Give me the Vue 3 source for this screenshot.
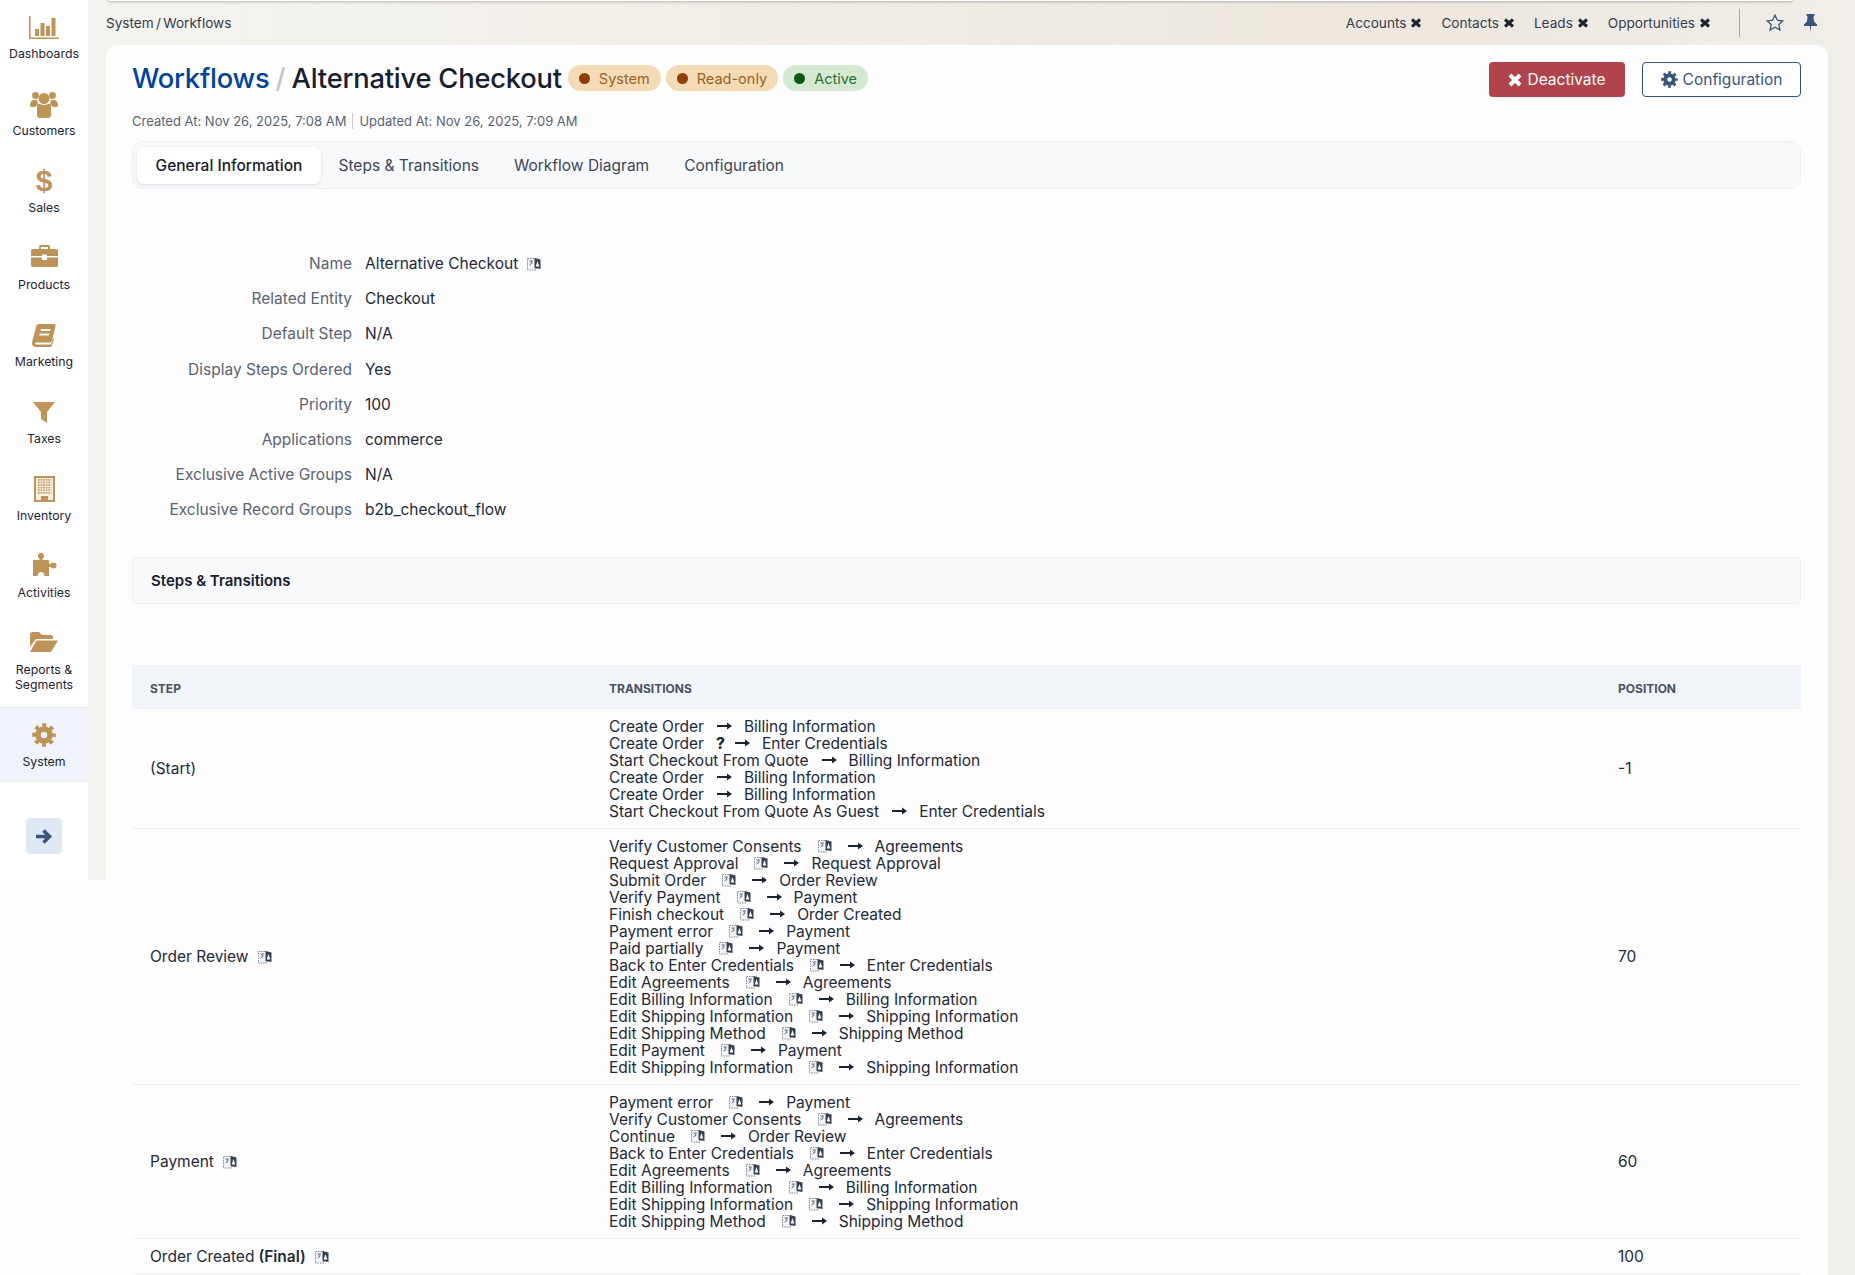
<script setup>
const tabs = ['General Information', 'Steps & Transitions', 'Workflow Diagram', 'Configuration']
const quick = ['Accounts', 'Contacts', 'Leads', 'Opportunities']
const details = [
  ['Name', 'Alternative Checkout', true],
  ['Related Entity', 'Checkout'],
  ['Default Step', 'N/A'],
  ['Display Steps Ordered', 'Yes'],
  ['Priority', '100'],
  ['Applications', 'commerce'],
  ['Exclusive Active Groups', 'N/A'],
  ['Exclusive Record Groups', 'b2b_checkout_flow'],
]
const nav = [
  { key: 'bars', label: ['Dashboards'] },
  { key: 'users', label: ['Customers'] },
  { key: 'dollar', label: ['Sales'] },
  { key: 'case', label: ['Products'] },
  { key: 'book', label: ['Marketing'] },
  { key: 'funnel', label: ['Taxes'] },
  { key: 'building', label: ['Inventory'] },
  { key: 'puzzle', label: ['Activities'] },
  { key: 'folder', label: ['Reports &', 'Segments'] },
  { key: 'cog', label: ['System'], active: true },
]
const t = (from, to, mark = 'tr') => ({ from, to, mark })
const rows = [
  { step: '(Start)', position: '-1', lines: [
    t('Create Order', 'Billing Information', ''),
    t('Create Order', 'Enter Credentials', 'q'),
    t('Start Checkout From Quote', 'Billing Information', ''),
    t('Create Order', 'Billing Information', ''),
    t('Create Order', 'Billing Information', ''),
    t('Start Checkout From Quote As Guest', 'Enter Credentials', ''),
  ] },
  { step: 'Order Review', icon: true, position: '70', lines: [
    t('Verify Customer Consents', 'Agreements'),
    t('Request Approval', 'Request Approval'),
    t('Submit Order', 'Order Review'),
    t('Verify Payment', 'Payment'),
    t('Finish checkout', 'Order Created'),
    t('Payment error', 'Payment'),
    t('Paid partially', 'Payment'),
    t('Back to Enter Credentials', 'Enter Credentials'),
    t('Edit Agreements', 'Agreements'),
    t('Edit Billing Information', 'Billing Information'),
    t('Edit Shipping Information', 'Shipping Information'),
    t('Edit Shipping Method', 'Shipping Method'),
    t('Edit Payment', 'Payment'),
    t('Edit Shipping Information', 'Shipping Information'),
  ] },
  { step: 'Payment', icon: true, position: '60', lines: [
    t('Payment error', 'Payment'),
    t('Verify Customer Consents', 'Agreements'),
    t('Continue', 'Order Review'),
    t('Back to Enter Credentials', 'Enter Credentials'),
    t('Edit Agreements', 'Agreements'),
    t('Edit Billing Information', 'Billing Information'),
    t('Edit Shipping Information', 'Shipping Information'),
    t('Edit Shipping Method', 'Shipping Method'),
  ] },
  { step: 'Order Created', final: true, icon: true, position: '100', lines: [] },
]
</script>

<template>
  <div class="app">
    <aside class="sidebar">
      <nav>
        <div v-for="n in nav" :key="n.key" class="nav-item" :class="{ active: n.active }">
          <div class="nav-icon">
            <svg v-if="n.key === 'bars'" width="30" height="23" viewBox="0 0 30 23"><path d="M0 0h1.6v21.4H30V23H0z" /><rect x="6" y="13" width="4" height="7" /><rect x="11.5" y="7" width="4" height="13" /><rect x="17" y="10" width="4" height="10" /><rect x="22.5" y="2" width="4" height="18" /></svg>
            <svg v-else-if="n.key === 'users'" width="28" height="27" viewBox="0 0 28 27"><circle cx="14" cy="7.5" r="5.5" /><circle cx="5.5" cy="4.5" r="3.4" /><circle cx="22.5" cy="4.5" r="3.4" /><path d="M0 14q0-5 5-5h2q1 3 1 4l-3 3H2q-2 0-2-2zM28 14q0-5-5-5h-2q-1 3-1 4l3 3h3q2 0 2-2z" /><path d="M7 15q0-3 3-2 4 2 8 0 3-1 3 2v9q0 3-3 3h-8q-3 0-3-3z" /></svg>
            <span v-else-if="n.key === 'dollar'" class="dollar">$</span>
            <svg v-else-if="n.key === 'case'" class="up2" width="27" height="22" viewBox="0 0 27 22"><path d="M8 5V2q0-2 2-2h7q2 0 2 2v3h-2V2h-7v3z" /><path d="M2 4h23q2 0 2 2v5H16V9.500h-5V11H0V6q0-2 2-2zM0 12.500h11V15h5v-2.500h11V20q0 2-2 2H2q-2 0-2-2z" /></svg>
            <svg v-else-if="n.key === 'book'" width="24" height="23" viewBox="0 0 24 23"><path fill-rule="evenodd" d="M7 0h15q2 0 1.500 2.500l-3.500 14q-.5 2-2.500 2H5q-2 0-2 1t2 1h14l2-6 1 1-2.500 7q-.3 .5-1 .5H4q-4 0-4-4 0-1 .5-2.500L4 3q.5-3 3-3zM9 5l-.5 2H18l.5-2zM7.700 9.500l-.5 2h9.500l.5-2z" /></svg>
            <svg v-else-if="n.key === 'funnel'" width="22" height="21" viewBox="0 0 22 21"><path d="M0 0h22l-8 10v11l-6-4v-7z" /></svg>
            <svg v-else-if="n.key === 'building'" width="21" height="26" viewBox="0 0 21 26">
              <defs><pattern id="windows" x="4" y="3" width="2.600" height="2.600" patternUnits="userSpaceOnUse"><rect width="1.600" height="1.600" fill="#bd9357" /></pattern></defs>
              <rect x="1" y="1" width="19" height="24" fill="#f8f0e2" stroke="#bd9357" stroke-width="2" />
              <rect x="4" y="3" width="13.500" height="15" fill="url(#windows)" />
              <rect x="7" y="20" width="7" height="5" />
            </svg>
            <svg v-else-if="n.key === 'puzzle'" class="up2" width="25" height="23" viewBox="0 0 25 23"><circle cx="9" cy="3" r="3" /><circle cx="21.500" cy="12.500" r="3" /><path d="M7.500 4h3v3H17v4h3v3h-3v9h-4.500q-.5-4-3.500-4t-3.500 4H1V7h6.500z" /></svg>
            <svg v-else-if="n.key === 'folder'" class="up1" width="28" height="20" viewBox="0 0 28 20"><path d="M0 3q0-3 3-3h6l3 3h9q2 0 2 2v2H6L0 15z" /><path d="M6.500 8.500H28L21 20H0z" /></svg>
            <svg v-else-if="n.key === 'cog'" width="24" height="24" viewBox="0 0 24 24"><g fill="none" stroke="#bd9357"><circle cx="12" cy="12" r="6" stroke-width="5.500" /><circle cx="12" cy="12" r="9.800" stroke-width="4" stroke-dasharray="3.900 3.800" stroke-dashoffset="2" /></g></svg>
          </div>
          <div class="nav-label"><div v-for="l in n.label" :key="l">{{ l }}</div></div>
        </div>
      </nav>
      <button class="collapse" type="button" aria-label="Expand">
        <svg width="16" height="15" viewBox="0 0 16 15" fill="none" stroke="#38547a" stroke-width="3.600"><path d="M0 7.500h13M7.500 1.500l6 6-6 6" /></svg>
      </button>
    </aside>

    <div class="main">
      <header class="topbar">
        <div class="crumbs">System / Workflows</div>
        <div class="top-right">
          <span v-for="q in quick" :key="q" class="quick">{{ q }}
            <svg class="x" width="10" height="10" viewBox="0 0 10 10" stroke="#1c2433" stroke-width="3"><path d="M1 1.500 9 8.500M9 1.500 1 8.500" /></svg>
          </span>
          <span class="top-divider"></span>
          <svg class="star" width="18" height="17" viewBox="0 0 18 17" fill="none" stroke="#38547a" stroke-width="1.300"><path d="m9 1.200 2.400 5 5.400.7-4 3.700 1.100 5.400L9 13.300 4.100 16l1.100-5.400-4-3.700 5.400-.7z" /></svg>
          <svg class="pin" width="13" height="18" viewBox="0 0 13 18" fill="#38547a"><path d="M2.500 0h8v1.500L9.500 2.500 10 7.500 13 10.500V12H7.200l-.7 6-.7-6H0v-1.500L3 7.500l.5-5L2.500 1.500z" /></svg>
        </div>
      </header>

      <main class="card">
        <div class="head">
          <div>
            <div class="title-row">
              <h1 class="title"><span class="link">Workflows</span><span class="slash"> / </span>Alternative Checkout</h1>
              <span class="badge warn"><i></i>System</span>
              <span class="badge warn"><i></i>Read-only</span>
              <span class="badge ok"><i></i>Active</span>
            </div>
            <div class="meta"><span>Created At: Nov 26, 2025, 7:08 AM</span><span class="meta-sep"></span><span>Updated At: Nov 26, 2025, 7:09 AM</span></div>
          </div>
          <div class="actions">
            <button class="btn danger" type="button">
              <svg width="14" height="14" viewBox="0 0 14 14" stroke="#fff" stroke-width="4"><path d="M2 2l10 10M12 2 2 12" /></svg>Deactivate
            </button>
            <button class="btn outline" type="button">
              <svg width="17" height="17" viewBox="0 0 24 24"><g fill="none" stroke="#38547a"><circle cx="12" cy="12" r="6" stroke-width="5.500" /><circle cx="12" cy="12" r="9.800" stroke-width="4" stroke-dasharray="3.900 3.800" stroke-dashoffset="2" /></g></svg>Configuration
            </button>
          </div>
        </div>

        <div class="tabs">
          <div v-for="(tab, i) in tabs" :key="tab" class="tab" :class="{ on: i === 0 }">{{ tab }}</div>
        </div>

        <div class="details">
          <div v-for="d in details" :key="d[0]" class="detail">
            <div class="d-label">{{ d[0] }}</div>
            <div class="d-value">{{ d[1] }}
              <svg v-if="d[2]" class="tr" width="14" height="16" viewBox="0 0 14 16"><rect x=".5" y="2.500" width="8.500" height="11.500" fill="#f3f4f6" stroke="#7f8996" stroke-dasharray="1.500 1" /><path d="M2.500 5h3.500M4.200 5v3M2.500 9l3-2" stroke="#6b7683" fill="none" /><path d="M7.500 2 13.500 3.500v9.500L7.500 12z" fill="#36424f" /><path d="M10.500 5 12.300 10.500H8.700z" fill="#fff" /></svg>
            </div>
          </div>
        </div>

        <div class="section">Steps &amp; Transitions</div>

        <div class="table">
          <div class="tr-row thead">
            <div class="c1">STEP</div>
            <div class="c2">TRANSITIONS</div>
            <div class="c3">POSITION</div>
          </div>
          <div v-for="r in rows" :key="r.step" class="tr-row tbody" :class="{ short: !r.lines.length }">
            <div class="c1">{{ r.step }}<b v-if="r.final"> (Final)</b>
              <svg v-if="r.icon" class="tr" width="14" height="16" viewBox="0 0 14 16"><rect x=".5" y="2.500" width="8.500" height="11.500" fill="#f3f4f6" stroke="#7f8996" stroke-dasharray="1.500 1" /><path d="M2.500 5h3.500M4.200 5v3M2.500 9l3-2" stroke="#6b7683" fill="none" /><path d="M7.500 2 13.500 3.500v9.500L7.500 12z" fill="#36424f" /><path d="M10.500 5 12.300 10.500H8.700z" fill="#fff" /></svg>
            </div>
            <div class="c2">
              <div v-for="(l, i) in r.lines" :key="i" class="line">
                <span>{{ l.from }}</span>
                <svg v-if="l.mark === 'tr'" class="tr wide" width="14" height="16" viewBox="0 0 14 16"><rect x=".5" y="2.500" width="8.500" height="11.500" fill="#f3f4f6" stroke="#7f8996" stroke-dasharray="1.500 1" /><path d="M2.500 5h3.500M4.200 5v3M2.500 9l3-2" stroke="#6b7683" fill="none" /><path d="M7.500 2 13.500 3.500v9.500L7.500 12z" fill="#36424f" /><path d="M10.500 5 12.300 10.500H8.700z" fill="#fff" /></svg>
                <b v-else-if="l.mark === 'q'" class="q">?</b>
                <svg class="arrow" width="15" height="8" viewBox="0 0 15 8" fill="#1c2433"><path d="M0 3h11v2H0z" /><path d="M10 .5 15 4l-5 3.500z" /></svg>
                <span>{{ l.to }}</span>
              </div>
            </div>
            <div class="c3">{{ r.position }}</div>
          </div>
        </div>
      </main>
    </div>
  </div>
</template>

<style scoped>
.app {
  display: grid;
  grid-template-columns: 88px 1fr;
  height: 1275px;
  overflow: hidden;
  font-family: Inter, "Noto Sans", sans-serif;
  color: #1e2939;
  background: #fdfdfd;
}
.sidebar {
  height: 880px;
  background: #fff;
  display: flex;
  flex-direction: column;
  align-items: center;
}
.sidebar nav { width: 100%; }
.nav-item {
  padding: 13px 0 16px;
  display: flex;
  flex-direction: column;
  align-items: center;
}
.nav-item.active {
  padding-bottom: 12px;
  background: #f0f4fa;
  border-top: 1px solid #e8ecf2;
  border-bottom: 1px solid #e8ecf2;
  margin-top: -1px;
}
.nav-icon {
  height: 28px;
  display: flex;
  align-items: center;
  justify-content: center;
  fill: #bd9357;
  color: #bd9357;
}
.up2 { margin-bottom: 4px; }
.up1 { margin-bottom: 2px; }
.dollar {
  font: 700 30px/28px "Liberation Sans", sans-serif;
}
.nav-label {
  margin-top: 5px;
  font-size: 12.3px;
  line-height: 15px;
  text-align: center;
  color: #1c2433;
}
.collapse {
  margin-top: 36px;
  width: 36px;
  height: 36px;
  border: 0;
  border-radius: 4px;
  background: #dfe9f6;
  display: flex;
  align-items: center;
  justify-content: center;
  padding: 0;
}
.main {
  background:
    linear-gradient(to bottom, transparent 880px, #f0efea 880px) right top / 27px 100% no-repeat,
    linear-gradient(to bottom, transparent 880px, #fdfdfd 880px),
    linear-gradient(to right, #f4f3ef, #ede7dd 75%, #f0eee8);
  padding: 0 27px 0 18px;
  position: relative;
  min-width: 0;
}
.topbar {
  height: 45px;
  display: flex;
  align-items: center;
  justify-content: space-between;
  font-size: 13.6px;
}
.topbar::before {
  content: "";
  position: absolute;
  left: 20px;
  right: 62px;
  top: -4px;
  height: 5px;
  background: #fff;
  border-radius: 4px;
  box-shadow: 0 1px 3px rgba(0, 0, 0, .25);
}
.crumbs { color: #333c4b; word-spacing: -1.5px; }
.top-right {
  display: flex;
  align-items: center;
  padding-right: 11px;
}
.quick {
  display: inline-flex;
  align-items: center;
  gap: 5px;
  margin-right: 20px;
  color: #343e50;
}
.top-divider {
  width: 1px;
  height: 28px;
  background: #a6abb2;
  margin: 0 26px 0 9px;
}
.pin { margin-left: 20px; }
.card {
  background: #fdfdfe;
  border-radius: 12px 12px 0 0;
  padding: 17px 27px 0 26px;
  height: 1230px;
}
.head {
  display: flex;
  justify-content: space-between;
  align-items: flex-start;
}
.title-row {
  display: flex;
  align-items: center;
  gap: 5px;
  height: 32px;
}
.title {
  margin: 0 1px 0 0;
  font-size: 27.3px;
  font-weight: 500;
  line-height: 34px;
  letter-spacing: -.2px;
  color: #17202e;
  white-space: pre-wrap;
  transform: translateY(1px);
}
.link { color: #00439c; }
.slash { color: #c2c4c8; word-spacing: -1px; }
.badge {
  height: 26px;
  border-radius: 13px;
  padding: 0 11px;
  display: inline-flex;
  align-items: center;
  gap: 9px;
  font-size: 14.5px;
}
.badge i {
  width: 11px;
  height: 11px;
  border-radius: 50%;
  background: currentColor;
}
.warn { background: #f3dcb5; color: #a0601f; }
.warn i { background: #8f3e05; }
.ok { background: #d4e8d2; color: #2c7030; }
.ok i { background: #0c5a14; }
.meta {
  margin-top: 18px;
  height: 18px;
  display: flex;
  align-items: center;
  font-size: 13px;
  color: #5a6371;
}
.meta-sep {
  width: 1px;
  height: 16px;
  background: #c7cbd1;
  margin: 0 6px;
}
.actions {
  display: flex;
  gap: 17px;
}
.btn {
  height: 35px;
  border-radius: 4px;
  font: 400 15.5px Inter, sans-serif;
  display: inline-flex;
  align-items: center;
  justify-content: center;
  gap: 5px;
  padding-top: 1px;
}
.danger {
  width: 136px;
  border: 0;
  background: #b0444d;
  color: #fff;
}
.outline {
  width: 159px;
  border: 1px solid #2f5280;
  background: #fff;
  color: #38547a;
}
.tabs {
  margin-top: 11px;
  height: 48px;
  box-sizing: border-box;
  border: 1px solid #edf0f4;
  border-radius: 10px;
  background: #f8f9fb;
  display: flex;
  align-items: center;
  padding: 0 0 0 4px;
  gap: 0;
  font-size: 15.5px;
  color: #3d4656;
}
.tab {
  padding: 0 17.500px;
  line-height: 37px;
  height: 37px;
}
.tab.on {
  width: 184px;
  box-sizing: border-box;
  text-align: center;
  padding: 0;
  background: #fff;
  border-radius: 7px;
  box-shadow: 0 1px 3px rgba(30, 41, 59, .14);
  color: #17202e;
  font-weight: 500;
}
.details {
  margin-top: 57px;
  font-size: 15.5px;
}
.detail {
  display: grid;
  grid-template-columns: 220px 1fr;
  column-gap: 13px;
  align-items: center;
  height: 35.200px;
}
.d-label {
  text-align: right;
  color: #5a6371;
}
.d-value {
  display: flex;
  align-items: center;
  gap: 9px;
  color: #1e2939;
}
.section {
  margin-top: 29px;
  height: 47px;
  box-sizing: border-box;
  border: 1px solid #eef0f4;
  border-radius: 4px;
  background: #f8f9fb;
  padding-left: 18px;
  display: flex;
  align-items: center;
  font-size: 15px;
  font-weight: 600;
  color: #17202e;
}
.table {
  margin-top: 61px;
  font-size: 15.5px;
}
.tr-row {
  display: grid;
  grid-template-columns: 459px 1009px 1fr;
}
.thead {
  height: 44px;
  box-sizing: border-box;
  padding-top: 3px;
  align-items: center;
  background: #f1f4f9;
  font-size: 12px;
  font-weight: 700;
  color: #4b5260;
}
.tbody {
  align-items: center;
  border-bottom: 1px solid #f0f1f3;
  padding: 9px 0 8px;
  box-sizing: border-box;
}
.tbody.short { height: 35px; padding: 2px 0 0; }
.c1, .c2, .c3 { padding-left: 18px; }
.tbody .c1 {
  display: flex;
  align-items: center;
  gap: 9px;
}
.c1 b { font-weight: 600; margin-left: -5px; }
.line {
  display: flex;
  align-items: center;
  height: 17px;
  line-height: 17px;
  color: #1e2939;
}
.tr { flex: none; }
.wide { margin-left: 16px; }
.q {
  margin-left: 12px;
  width: 6px;
  font-weight: 800;
}
.arrow {
  flex: none;
  margin: 0 12px 0 13px;
}
.wide + .arrow { margin-left: 16px; }
</style>

<style>
html, body { margin: 0; overflow: hidden; }
</style>
